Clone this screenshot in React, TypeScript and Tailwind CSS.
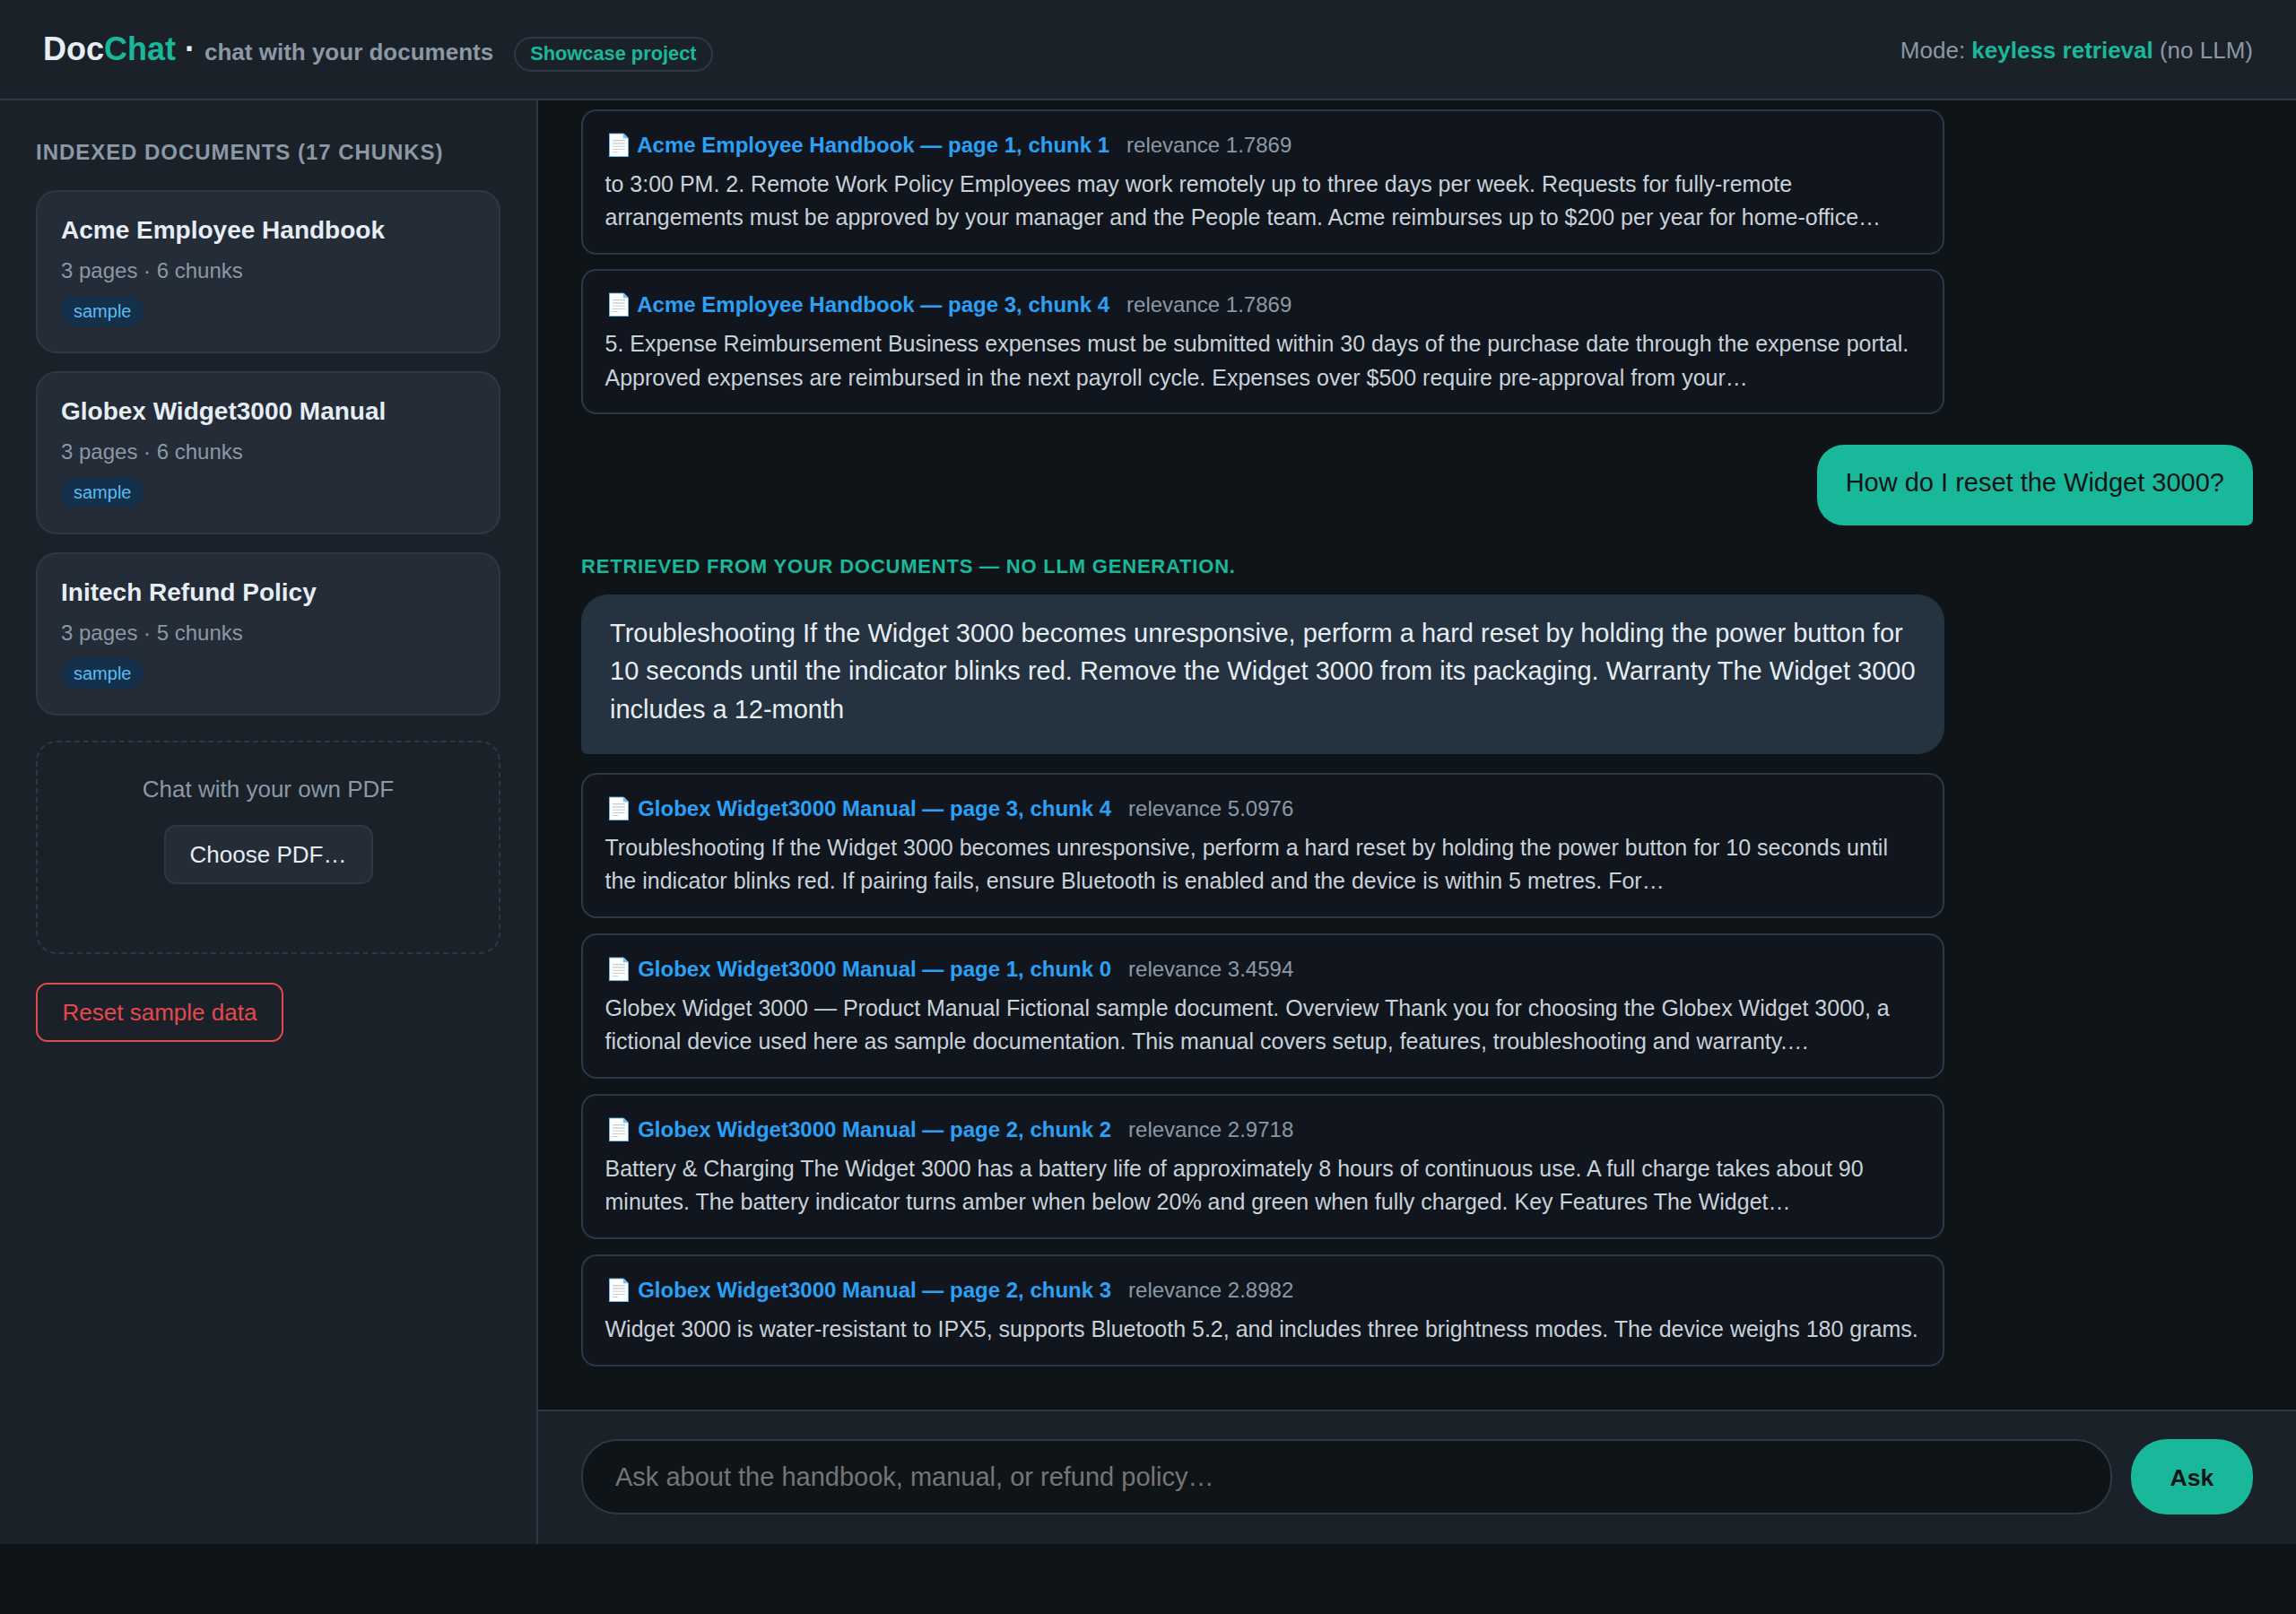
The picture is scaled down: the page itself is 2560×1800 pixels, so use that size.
const DOCS = [
  { name: "Acme Employee Handbook", meta: "3 pages · 6 chunks" },
  { name: "Globex Widget3000 Manual", meta: "3 pages · 6 chunks" },
  { name: "Initech Refund Policy", meta: "3 pages · 5 chunks" },
];

const TOP_SOURCES = [
  {
    title: "Acme Employee Handbook — page 1, chunk 1",
    score: "1.7869",
    text: "to 3:00 PM. 2. Remote Work Policy Employees may work remotely up to three days per week. Requests for fully-remote arrangements must be approved by your manager and the People team. Acme reimburses up to $200 per year for home-office…",
  },
  {
    title: "Acme Employee Handbook — page 3, chunk 4",
    score: "1.7869",
    text: "5. Expense Reimbursement Business expenses must be submitted within 30 days of the purchase date through the expense portal. Approved expenses are reimbursed in the next payroll cycle. Expenses over $500 require pre-approval from your…",
  },
];

const SOURCES = [
  {
    title: "Globex Widget3000 Manual — page 3, chunk 4",
    score: "5.0976",
    text: "Troubleshooting If the Widget 3000 becomes unresponsive, perform a hard reset by holding the power button for 10 seconds until the indicator blinks red. If pairing fails, ensure Bluetooth is enabled and the device is within 5 metres. For…",
  },
  {
    title: "Globex Widget3000 Manual — page 1, chunk 0",
    score: "3.4594",
    text: "Globex Widget 3000 — Product Manual Fictional sample document. Overview Thank you for choosing the Globex Widget 3000, a fictional device used here as sample documentation. This manual covers setup, features, troubleshooting and warranty.…",
  },
  {
    title: "Globex Widget3000 Manual — page 2, chunk 2",
    score: "2.9718",
    text: "Battery & Charging The Widget 3000 has a battery life of approximately 8 hours of continuous use. A full charge takes about 90 minutes. The battery indicator turns amber when below 20% and green when fully charged. Key Features The Widget…",
  },
  {
    title: "Globex Widget3000 Manual — page 2, chunk 3",
    score: "2.8982",
    text: "Widget 3000 is water-resistant to IPX5, supports Bluetooth 5.2, and includes three brightness modes. The device weighs 180 grams.",
  },
];

function SourceCard({ title, score, text }: { title: string; score: string; text: string }) {
  return (
    <div className="w-[1520px] rounded-[17px] border-2 border-[#2d3846] bg-[#11161e] pt-[19px] pr-[25px] pb-[20.5px] pl-[24.5px]">
      <div className="flex items-baseline gap-[19px] leading-[37.2px]">
        <span className="text-[24px] font-bold text-[#2ba0f5]">📄 {title}</span>
        <span className="text-[24px] text-[#8b98a5]">relevance {score}</span>
      </div>
      <p className="mt-[7px] text-[25px] leading-[37.2px] text-[#c9d1d9]">{text}</p>
    </div>
  );
}

export default function App() {
  return (
    <div className="h-[1800px] w-[2560px] overflow-hidden bg-[#0f1419] font-['Liberation_Sans',Arial,sans-serif] text-[#e6edf3]">
      <div className="flex h-[1722px] flex-col">
        {/* Header */}
        <header className="flex h-[112px] shrink-0 items-center justify-between border-b-2 border-[#2d3846] bg-[#1a2129] px-[48px]">
          <div className="flex items-baseline">
            <span className="text-[36px] font-bold">
              Doc<span className="text-[#1ab89a]">Chat</span>
            </span>
            <span className="ml-[10px] text-[36px] font-bold text-[#e6edf3]">·</span>
            <span className="ml-[10px] text-[26px] font-semibold text-[#8b98a5]">chat with your documents</span>
            <span className="ml-[23px] rounded-full border-2 border-[#2d3846] px-[16px] py-[1.5px] text-[21.8px] font-semibold text-[#1ab89a]">
              Showcase project
            </span>
          </div>
          <div className="pt-[2px] text-[26px] text-[#8b98a5]">
            Mode: <span className="font-semibold text-[#1ab89a]">keyless retrieval</span> (no LLM)
          </div>
        </header>

        <div className="flex min-h-0 flex-1">
          {/* Sidebar */}
          <aside className="w-[600px] shrink-0 border-r-2 border-[#2d3846] bg-[#1a2129] px-[40px] pt-[42px]">
            <h2 className="text-[24px] leading-[32px] font-semibold tracking-[0.96px] text-[#8b98a5] uppercase">
              Indexed documents (17 chunks)
            </h2>
            <div className="mt-[26px] flex w-[518px] flex-col gap-[20px]">
              {DOCS.map((d) => (
                <div key={d.name} className="h-[182px] rounded-[23px] border-2 border-[#2d3846] bg-[#232c37] px-[26px] pt-[25px]">
                  <div className="text-[28px] leading-[36px] font-semibold text-[#e6edf3]">{d.name}</div>
                  <div className="mt-[8px] text-[24px] leading-[37px] text-[#8b98a5]">{d.meta}</div>
                  <span className="mt-[10px] inline-block rounded-full bg-[#14304a] px-[14px] text-[20px] leading-[34px] text-[#58bdf5]">
                    sample
                  </span>
                </div>
              ))}
            </div>
            <div className="mt-[28px] h-[238px] w-[518px] rounded-[23px] border-2 border-dashed border-[#2d3846] pt-[32px] text-center">
              <div className="text-[26px] leading-[40px] text-[#8b98a5]">Chat with your own PDF</div>
              <button className="mt-[20px] h-[66px] w-[233px] rounded-[13px] border-2 border-[#2d3846] bg-[#232c37] text-[26px] text-[#e6edf3]">
                Choose PDF…
              </button>
            </div>
            <button className="mt-[32px] h-[66px] w-[276px] rounded-[13px] border-2 border-[#e5484d] text-[26px] text-[#e5484d]">
              Reset sample data
            </button>
          </aside>

          {/* Chat */}
          <main className="flex min-w-0 flex-1 flex-col">
            <div className="flex min-h-0 flex-1 flex-col overflow-hidden px-[48px] pt-[10px]">
              <div className="flex flex-col gap-[16px]">
                {TOP_SOURCES.map((s) => (
                  <SourceCard key={s.title} {...s} />
                ))}
              </div>
              <div className="mt-[33.5px] self-end rounded-[30px] rounded-br-[7px] bg-[#1ab89a] px-[32px] pt-[21.5px] pb-[25.5px] text-[29px] leading-[43px] text-[#0f1419]">
                How do I reset the Widget 3000?
              </div>
              <div className="mt-[32.5px] text-[22px] leading-[28px] font-semibold tracking-[0.8px] text-[#1ab89a] uppercase">
                Retrieved from your documents — no LLM generation.
              </div>
              <div className="mt-[17px] w-[1520px] rounded-[30px] rounded-bl-[7px] bg-[#253240] px-[32px] pt-[21.5px] pb-[28.5px] text-[29px] leading-[42.67px] text-[#e6edf3]">
                Troubleshooting If the Widget 3000 becomes unresponsive, perform a hard reset by holding the power button for 10 seconds until the indicator blinks red. Remove the Widget 3000 from its packaging. Warranty The Widget 3000 includes a 12-month
              </div>
              <div className="mt-[20.5px] flex flex-col gap-[17px]">
                {SOURCES.map((s) => (
                  <SourceCard key={s.title} {...s} />
                ))}
              </div>
            </div>

            {/* Composer */}
            <div className="flex h-[150px] shrink-0 items-center gap-[21px] border-t-2 border-[#2d3846] bg-[#1a2129] px-[48px] pb-[2px]">
              <input
                placeholder="Ask about the handbook, manual, or refund policy…"
                className="h-[84px] min-w-0 flex-1 rounded-[40px] border-2 border-[#2d3846] bg-[#0f1419] px-[36px] text-[29px] outline-none placeholder:text-[#757575]"
              />
              <button className="h-[84px] w-[136px] shrink-0 rounded-[40px] bg-[#1ab89a] pt-[2px] text-[26.67px] font-bold text-[#0f1419]">
                Ask
              </button>
            </div>
          </main>
        </div>
      </div>
    </div>
  );
}
